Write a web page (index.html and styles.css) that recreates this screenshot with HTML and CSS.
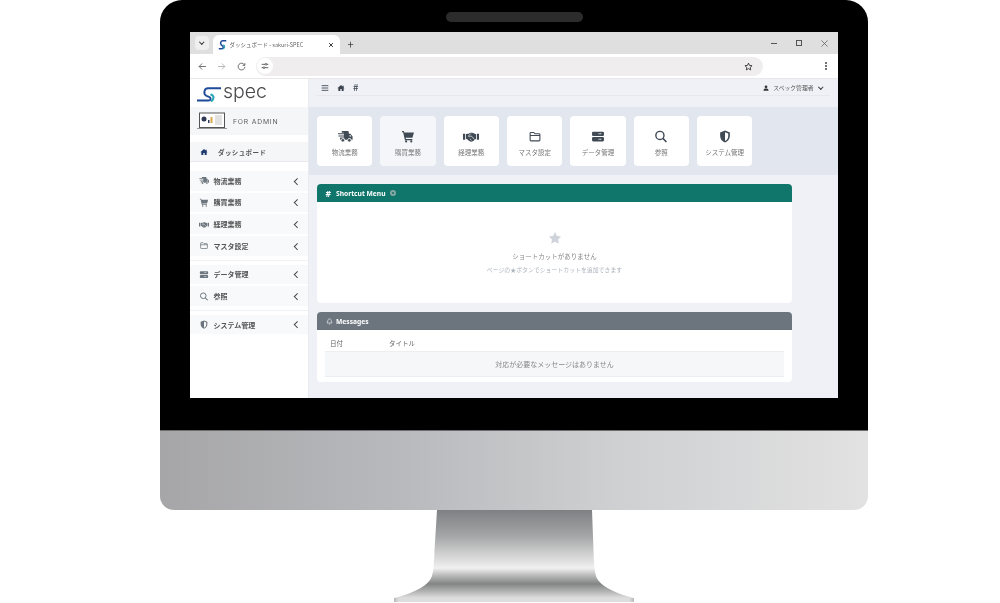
FILE: index.html
```html
<!DOCTYPE html>
<html lang="ja">
<head>
  <meta charset="UTF-8" />
  <title>SPEC monitor</title>
  <link rel="stylesheet" href="styles.css">
</head>
<body>
  <svg class="defs" width="0" height="0">
    <symbol id="i-home" viewBox="0 0 24 24"><path d="M12 3 1 13h3v8h6v-6h4v6h6v-8h3l-3-2.700V5h-3v2.600z"/></symbol>
    <symbol id="i-truck" viewBox="0 0 28 24"><path d="M8 2h11a2 2 0 0 1 2 2v3h3l4 5v6h-2.200a3.500 3.500 0 0 0-6.800 0h-5a3.500 3.500 0 0 0-6.800 0H5v-4h7v-2H2v-2h10V8H1V6h11V5H8z"/><circle cx="10" cy="19" r="3.200" stroke="#fff" stroke-width="1.200"/><circle cx="22" cy="19" r="3.200" stroke="#fff" stroke-width="1.200"/><path fill="#fff" d="M22.500 9h1.300l2 3h-3.300z"/></symbol>
    <symbol id="i-cart" viewBox="0 0 24 24"><path d="M1 2h3.500l.6 2.500H23l-2.800 10H7.800l.4 2H20v2.300H6.300L3 4.300H1z"/><circle cx="8.500" cy="21" r="2"/><circle cx="18" cy="21" r="2"/></symbol>
    <symbol id="i-hands" viewBox="0 0 30 24"><path d="M0 7h4v11H0zM26 7h4v11h-4zM5.500 7.500l5-.5 3-2h4l7 3v8.500l-2.500 1-2.500 3-4 1.500-4-1.500-3-3-3-1.500z"/><path fill="none" stroke="#fff" stroke-width="1.300" d="M14.500 6.500 10 11.500c1.500 1.500 3 1 5-.8l6.500 6.300M16 19l-3-2.500"/></symbol>
    <symbol id="i-folder" viewBox="0 0 24 24"><path fill="none" stroke="currentColor" stroke-width="2" d="M3 6a1.500 1.500 0 0 1 1.500-1.500h5l2.500 2.500h7.500A1.500 1.500 0 0 1 21 8.500v10a1.500 1.500 0 0 1-1.500 1.500h-15A1.500 1.500 0 0 1 3 18.500zM3 10h18"/></symbol>
    <symbol id="i-server" viewBox="0 0 24 24"><path fill-rule="evenodd" d="M3 3h18a2 2 0 0 1 2 2v4a2 2 0 0 1-2 2H3a2 2 0 0 1-2-2V5a2 2 0 0 1 2-2zm13 3v2h2V6zm-3 0v2h2V6zM3 13h18a2 2 0 0 1 2 2v4a2 2 0 0 1-2 2H3a2 2 0 0 1-2-2v-4a2 2 0 0 1 2-2zm13 3v2h2v-2zm-3 0v2h2v-2z"/></symbol>
    <symbol id="i-search" viewBox="0 0 24 24"><circle cx="10" cy="10" r="7.500" fill="none" stroke="currentColor" stroke-width="2.600"/><path d="m15.500 15.500 6.500 6.500" stroke="currentColor" stroke-width="2.800"/></symbol>
    <symbol id="i-shield" viewBox="0 0 24 24"><path fill-rule="evenodd" d="M12 1 3 4.500V11c0 5.500 3.800 10 9 12 5.200-2 9-6.500 9-12V4.500zm0 3v16.500c3.800-1.700 6-5.200 6-9.500V6.500z"/></symbol>
    <symbol id="i-user" viewBox="0 0 24 24"><circle cx="12" cy="7" r="5.500"/><path d="M2 23c0-6 3-9 7-9h6c4 0 7 3 7 9z"/></symbol>
    <symbol id="i-s" viewBox="0 0 24 16"><path fill="none" stroke="#1f4a98" stroke-width="1.900" d="M0 14.500H11.500C14 14.500 14.500 11.800 12 10.800L9.500 9.800C6 8.300 7 2.200 11 2.200H24"/><path fill="none" stroke="#28a5b5" stroke-width="2" d="M13.500 8.200C17.500 9.800 17.500 12.800 14 15.500"/></symbol>
    <symbol id="i-fav" viewBox="0 0 12 14"><path fill="none" stroke="#1f4a98" stroke-width="2" d="M1 12.500H5C7.500 12.500 7.500 10 6 9L4.500 7.500C2.500 5.500 3.500 2 6.500 2H11"/><path fill="none" stroke="#28a5b5" stroke-width="1.600" d="M7 7.500C9.500 9 9.500 11 7 13"/></symbol>
  </svg>

  <div class="page">
    <div class="monitor">
      <div class="bezel">
        <div class="camera"></div>
        <div class="screen">

          <div class="tabstrip">
            <span class="tab-menu"><i class="chev-down"></i></span>
            <div class="tab">
              <svg class="favicon"><use href="#i-fav"/></svg>
              <span class="tab-title">ダッシュボード - sakuri-SPEC</span>
              <svg class="tab-close" viewBox="0 0 8 8"><path d="M1.500 1.500l5 5M6.500 1.500l-5 5"/></svg>
            </div>
            <span class="tab-new">+</span>
            <div class="win-controls">
              <span class="win-min"></span>
              <span class="win-max"></span>
              <svg class="win-close" viewBox="0 0 8 8"><path d="M.5.500l7 7M7.500.500l-7 7"/></svg>
            </div>
          </div>

          <div class="toolbar">
            <svg class="tb-icon" viewBox="0 0 12 12"><path d="M10.500 6h-9M5.500 2l-4 4 4 4"/></svg>
            <svg class="tb-icon tb-off" viewBox="0 0 12 12"><path d="M1.500 6h9M6.500 2l4 4-4 4"/></svg>
            <svg class="tb-icon" viewBox="0 0 12 12"><path d="M10 4a4.500 4.500 0 1 0 .5 2.500M10.500 1.500V4.500H7.500"/></svg>
            <div class="urlbar">
              <span class="url-tune">
                <svg viewBox="0 0 12 12"><path d="M1 3.500h5M9 3.500h2M1 8.500h2M6 8.500h5"/><circle cx="7.500" cy="3.500" r="1.300"/><circle cx="4.500" cy="8.500" r="1.300"/></svg>
              </span>
              <svg class="url-star" viewBox="0 0 24 24"><path d="m12 3 2.800 6.100 6.700.8-5 4.500 1.400 6.600-5.900-3.300L6.100 21l1.400-6.600-5-4.500 6.700-.8z"/></svg>
            </div>
            <span class="kebab"></span>
          </div>

          <div class="app">
            <aside class="sidebar">
              <div class="brand">
                <svg class="brand-mark"><use href="#i-s"/></svg>
                <span class="brand-name">spec</span>
              </div>
              <div class="admin">
                <svg class="laptop" viewBox="0 0 30 18">
                  <rect x="2.500" y="1" width="25" height="14.500" fill="#fff" stroke="#555" stroke-width="1"/>
                  <path d="M0 16.500h30" stroke="#999" stroke-width="1"/>
                  <circle cx="7" cy="7" r="2.500" fill="#2f3a55"/>
                  <rect x="11" y="8" width="1.500" height="3" fill="#2f3a55"/>
                  <rect x="13.500" y="5" width="2" height="6" fill="#d9a94b"/>
                  <rect x="18" y="3" width="7" height="10" fill="#e2e2e2"/>
                </svg>
                <span class="admin-label">FOR ADMIN</span>
              </div>
              <div class="dash-row">
                <svg class="dash-icon"><use href="#i-home"/></svg>
                <span>ダッシュボード</span>
              </div>

              <div class="side-group">
                <div class="side-row"><svg><use href="#i-truck"/></svg><span>物流業務</span><i class="chev"></i></div>
                <div class="side-row"><svg><use href="#i-cart"/></svg><span>購買業務</span><i class="chev"></i></div>
                <div class="side-row"><svg><use href="#i-hands"/></svg><span>経理業務</span><i class="chev"></i></div>
                <div class="side-row"><svg><use href="#i-folder"/></svg><span>マスタ設定</span><i class="chev"></i></div>
              </div>
              <div class="side-group">
                <div class="side-row"><svg><use href="#i-server"/></svg><span>データ管理</span><i class="chev"></i></div>
                <div class="side-row"><svg><use href="#i-search"/></svg><span>参照</span><i class="chev"></i></div>
              </div>
              <div class="side-group">
                <div class="side-row"><svg><use href="#i-shield"/></svg><span>システム管理</span><i class="chev"></i></div>
              </div>
            </aside>

            <main class="main">
              <div class="topbar">
                <div class="topbar-inner">
                  <svg class="top-icon" viewBox="0 0 12 12"><path d="M1 2.500h10M1 6h10M1 9.500h10" stroke="currentColor" stroke-width="1.300"/></svg>
                  <svg class="top-icon top-home"><use href="#i-home"/></svg>
                  <span class="top-hash">#</span>
                  <div class="top-user">
                    <svg class="user-icon"><use href="#i-user"/></svg>
                    <span>スペック管理者</span>
                    <i class="chev-down"></i>
                  </div>
                </div>
              </div>

              <div class="quick">
                <div class="quick-card"><svg class="qi-wide"><use href="#i-truck"/></svg><span>物流業務</span></div>
                <div class="quick-card is-hover"><svg><use href="#i-cart"/></svg><span>購買業務</span></div>
                <div class="quick-card"><svg class="qi-wide"><use href="#i-hands"/></svg><span>経理業務</span></div>
                <div class="quick-card"><svg><use href="#i-folder"/></svg><span>マスタ設定</span></div>
                <div class="quick-card"><svg><use href="#i-server"/></svg><span>データ管理</span></div>
                <div class="quick-card"><svg><use href="#i-search"/></svg><span>参照</span></div>
                <div class="quick-card"><svg><use href="#i-shield"/></svg><span>システム管理</span></div>
              </div>

              <div class="content">
                <section class="panel panel-shortcut">
                  <header class="panel-head head-teal">
                    <span class="head-hash">#</span>
                    <span>Shortcut Menu</span>
                    <span class="head-gear"></span>
                  </header>
                  <div class="empty">
                    <svg class="empty-star" viewBox="0 0 24 24"><path d="m12 1.500 3.300 6.900 7.200 1-5.300 5.100 1.300 7.500-6.500-3.600L5.500 22l1.300-7.500L1.500 9.400l7.200-1z"/></svg>
                    <p class="empty-title">ショートカットがありません</p>
                    <p class="empty-sub">ページの★ボタンでショートカットを追加できます</p>
                  </div>
                </section>

                <section class="panel panel-messages">
                  <header class="panel-head head-grey">
                    <svg class="head-bell" viewBox="0 0 12 12"><path d="M6 1.500c-2 0-3 1.500-3 3.500 0 2-1 3-1.500 3.500h9C10 8 9 7 9 5c0-2-1-3.500-3-3.500zM5 10.500h2"/></svg>
                    <span>Messages</span>
                  </header>
                  <div class="msg-table">
                    <div class="msg-cols"><span class="col-date">日付</span><span>タイトル</span></div>
                    <div class="msg-empty">対応が必要なメッセージはありません</div>
                  </div>
                </section>
              </div>
            </main>
          </div>
        </div>
      </div>
      <div class="chin"></div>
    </div>

    <svg class="stand" width="240" height="93" viewBox="0 0 240 93">
      <defs>
        <linearGradient id="neck" x1="0" y1="0" x2="0" y2="1">
          <stop offset="0" stop-color="#7f8083"/>
          <stop offset="0.3" stop-color="#a5a6a8"/>
          <stop offset="0.5" stop-color="#d0d0d0"/>
          <stop offset="0.66" stop-color="#f0f0f0"/>
          <stop offset="0.74" stop-color="#bcbcbc"/>
          <stop offset="0.84" stop-color="#838485"/>
          <stop offset="0.93" stop-color="#b5b5b5"/>
          <stop offset="1" stop-color="#dedede"/>
        </linearGradient>
        <linearGradient id="base" x1="0" y1="0" x2="1" y2="0">
          <stop offset="0" stop-color="#b8b9bb"/>
          <stop offset="0.02" stop-color="#dcdddf"/>
          <stop offset="0.98" stop-color="#dcdddf"/>
          <stop offset="1" stop-color="#b8b9bb"/>
        </linearGradient>
      </defs>
      <path fill="url(#neck)" d="M43 0H198L199.500 40C200 58 201 66 204 70 210 78 224 84 240 88H0C16 84 30 78 36 70 39 66 40 58 40.500 40Z"/>
      <rect x="0" y="88" width="240" height="4" fill="url(#base)"/>
    </svg>
  </div>
</body>
</html>
```

FILE: styles.css
```css
* {
  margin: 0;
  padding: 0;
  box-sizing: border-box;
}

html, body {
  height: 100%;
  overflow: hidden;
}

body {
  background: #fff;
  font-family: "Noto Sans CJK JP", "Noto Sans", sans-serif;
  color: #555;
}

.defs {
  position: absolute;
}

svg {
  fill: currentColor;
  display: block;
}

.page {
  display: flex;
  flex-direction: column;
  align-items: center;
  padding-left: 28px;
}

.monitor {
  width: 708px;
}

.bezel {
  position: relative;
  height: 430px;
  background: #000;
  border-radius: 22px 22px 0 0;
  padding: 32px 30px 32px 29.500px;
}

.camera {
  position: absolute;
  top: 12px;
  left: 286px;
  width: 137px;
  height: 10px;
  border-radius: 5px;
  background: #2c2c2c;
}

/* the reference is a scaled-down screenshot, so everything on the screen is soft */
.screen {
  height: 366px;
  display: flex;
  flex-direction: column;
  background: #fff;
  filter: blur(0.3px);
}

.chin {
  height: 80px;
  border-top: 1px solid #6d6d6f;
  border-radius: 0 0 14px 14px;
  background: linear-gradient(to right, #a6a6a9, #b9babd 35%, #cfd0d2 65%, #e2e2e2);
}

/* browser chrome */
.tabstrip {
  height: 22px;
  display: flex;
  align-items: flex-end;
  background: #dfdfdf;
  padding-left: 5px;
  flex: none;
}

.tab-menu {
  width: 14px;
  height: 14px;
  margin-bottom: 4px;
  border-radius: 4px;
  background: #efefef;
  display: flex;
  align-items: center;
  justify-content: center;
}

.tab {
  width: 127px;
  height: 19px;
  margin-left: 4px;
  display: flex;
  align-items: center;
  padding: 0 5.500px 0 5px;
  background: #fff;
  border-radius: 6px 6px 0 0;
}

.favicon {
  width: 9px;
  height: 11px;
}

.tab-title {
  margin-left: 3px;
  font-size: 5.500px;
  color: #666;
  white-space: nowrap;
  flex: 1;
}

.tab-close {
  width: 6px;
  height: 6px;
  fill: none;
  stroke: #333;
  stroke-width: 1.300;
}

.tab-new {
  width: 22px;
  height: 18px;
  font-size: 11px;
  line-height: 17px;
  text-align: center;
  color: #444;
}

.win-controls {
  margin-left: auto;
  height: 22px;
  display: flex;
  align-items: center;
  gap: 19px;
  padding-right: 10px;
}

.win-min {
  width: 6px;
  height: 1px;
  background: #555;
}

.win-max {
  width: 6px;
  height: 6px;
  border: 1px solid #555;
}

.win-close {
  width: 7px;
  height: 7px;
  fill: none;
  stroke: #555;
  stroke-width: 0.800;
}

.toolbar {
  height: 25px;
  display: flex;
  align-items: center;
  padding: 0 8px;
  flex: none;
  background: #fff;
  border-bottom: 1px solid #e8e8e8;
}

.tb-icon {
  width: 9px;
  height: 9px;
  margin-right: 10.500px;
  fill: none;
  stroke: #555;
  stroke-width: 1.100;
}

.tb-off {
  stroke: #aaa;
}

.urlbar {
  width: 507px;
  height: 19px;
  border-radius: 10px;
  background: #efedee;
  display: flex;
  align-items: center;
  justify-content: space-between;
  padding: 0 10px 0 1px;
}

.url-tune {
  width: 16px;
  height: 16px;
  border-radius: 50%;
  background: #fff;
  display: flex;
  align-items: center;
  justify-content: center;
}

.url-tune svg {
  width: 8px;
  height: 8px;
  fill: none;
  stroke: #444;
  stroke-width: 1.200;
}

.url-star {
  width: 9px;
  height: 9px;
  fill: none;
  stroke: #333;
  stroke-width: 2.400;
}

.kebab {
  width: 2px;
  height: 2px;
  margin-left: 62px;
  border-radius: 50%;
  background: #444;
  box-shadow: 0 -3px 0 #444, 0 3px 0 #444;
}

/* app */
.app {
  flex: 1;
  display: flex;
  min-height: 0;
}

.sidebar {
  width: 119.500px;
  flex: none;
  background: #fff;
  border-right: 1px solid #e9ebf0;
}

.brand {
  height: 28px;
  display: flex;
  align-items: center;
  padding-left: 7px;
  gap: 2.500px;
}

.brand-mark {
  width: 24px;
  height: 16px;
  margin-top: 2px;
}

.brand-name {
  font-family: "Inter", sans-serif;
  font-size: 19.500px;
  font-weight: 300;
  color: #4b4b4e;
  line-height: 20px;
  margin-top: -4px;
}

.admin {
  height: 28px;
  background: #f5f6f8;
  display: flex;
  align-items: center;
  padding-left: 7px;
}

.laptop {
  width: 30px;
  height: 18px;
}

.admin-label {
  margin-left: 6.500px;
  font-family: "Inter", sans-serif;
  font-size: 6.800px;
  letter-spacing: 0.800px;
  color: #5c5c5c;
}

.dash-row {
  height: 20px;
  margin-top: 7px;
  display: flex;
  align-items: center;
  padding-left: 10px;
  background: #f5f6f8;
  border-bottom: 1px solid #e8e9ec;
  font-size: 6.500px;
  font-weight: 700;
  letter-spacing: 0.400px;
  color: #555;
}

.dash-icon {
  width: 8px;
  height: 8px;
  margin-right: 10.500px;
  color: #1d3a6e;
}

.side-group {
  display: flex;
  flex-direction: column;
  gap: 2.200px;
  padding: 4px 0;
  border-top: 1px solid #f0f1f3;
}

.dash-row + .side-group {
  margin-top: 5px;
  border-top: 0;
}

.side-row {
  height: 19.500px;
  display: flex;
  align-items: center;
  padding-left: 9px;
  background: #f8f9fa;
  font-size: 7px;
  font-weight: 700;
  color: #555;
}

.side-row svg {
  width: 10px;
  height: 9px;
  margin-right: 5px;
  color: #6c757d;
}

.chev {
  margin-left: auto;
  margin-right: 9px;
  width: 4.500px;
  height: 4.500px;
  border-left: 0.800px solid #444;
  border-bottom: 0.800px solid #444;
  transform: rotate(45deg);
}

.main {
  flex: 1;
  min-width: 0;
  background: #eff1f6;
  display: flex;
  flex-direction: column;
}

.topbar {
  height: 28px;
  padding: 0 8px 0 7px;
  flex: none;
}

.topbar-inner {
  height: 17px;
  display: flex;
  align-items: center;
  border-bottom: 1px solid #e6e8ee;
  padding: 1px 8px 0 5px;
  color: #3d4650;
}

.top-icon {
  width: 8px;
  height: 8px;
}

.top-home {
  margin-left: 8px;
}

.top-hash {
  margin-left: 8px;
  font-size: 9.500px;
  line-height: 9px;
  font-weight: 500;
}

.top-user {
  margin-left: auto;
  display: flex;
  align-items: center;
  font-size: 5.800px;
  color: #555;
}

.user-icon {
  width: 6px;
  height: 6px;
  margin-right: 4px;
  color: #333;
}

.chev-down {
  display: block;
  width: 3.500px;
  height: 3.500px;
  margin: -2px 0 0 0;
  border-right: 1px solid #333;
  border-bottom: 1px solid #333;
  transform: rotate(45deg);
}

.top-user .chev-down {
  margin-left: 5px;
}

.quick {
  height: 68px;
  flex: none;
  display: flex;
  gap: 8px;
  padding: 9px 8px;
  background: #e2e6ee;
}

.quick-card {
  width: 55.330px;
  display: flex;
  flex-direction: column;
  align-items: center;
  padding-top: 14px;
  background: #fff;
  border-radius: 4px;
  font-size: 6.500px;
  color: #777;
}

.quick-card.is-hover {
  background: #f5f6f9;
}

.quick-card svg {
  width: 14px;
  height: 13px;
  margin-bottom: 4px;
  color: #3f4a55;
}

.quick-card svg.qi-wide {
  width: 16px;
}

.content {
  padding: 9px 46px 0 8px;
  display: flex;
  flex-direction: column;
  gap: 9px;
}

.panel {
  background: #fff;
  border-radius: 4px;
  overflow: hidden;
}

.panel-shortcut {
  height: 119px;
}

.panel-messages {
  height: 70px;
}

.panel-head {
  height: 18px;
  display: flex;
  align-items: center;
  gap: 3.500px;
  padding-left: 8.500px;
  color: #fff;
  font-family: "Noto Sans", sans-serif;
  font-size: 6.700px;
  font-weight: 700;
}

.head-teal {
  background: #10766b;
}

.head-grey {
  background: #6c757d;
}

.head-hash {
  font-size: 8.500px;
  margin-right: 1.500px;
}

.head-gear {
  width: 6px;
  height: 6px;
  margin-left: 1px;
  border-radius: 50%;
  border: 2px solid #86a6a3;
}

.head-bell {
  width: 7px;
  height: 7px;
  fill: none;
  stroke: #fff;
  stroke-width: 1;
}

.empty {
  display: flex;
  flex-direction: column;
  align-items: center;
  padding-top: 29px;
}

.empty-star {
  width: 14px;
  height: 14px;
  color: #ced4da;
}

.empty-title {
  margin-top: 6px;
  font-size: 6.500px;
  line-height: 10px;
  color: #888;
}

.empty-sub {
  margin-top: 4px;
  font-size: 5.900px;
  line-height: 10px;
  color: #adb5bd;
}

.msg-table {
  padding: 0 8px;
}

.msg-cols {
  height: 22px;
  display: flex;
  align-items: center;
  padding: 4px 0 0 5px;
  font-size: 6.500px;
  color: #666;
  border-bottom: 1px solid #eceef1;
}

.col-date {
  width: 59px;
}

.msg-empty {
  height: 25px;
  background: #f6f7f9;
  border-bottom: 1px solid #eceef1;
  font-size: 7px;
  line-height: 25px;
  text-align: center;
  color: #888;
}
```
